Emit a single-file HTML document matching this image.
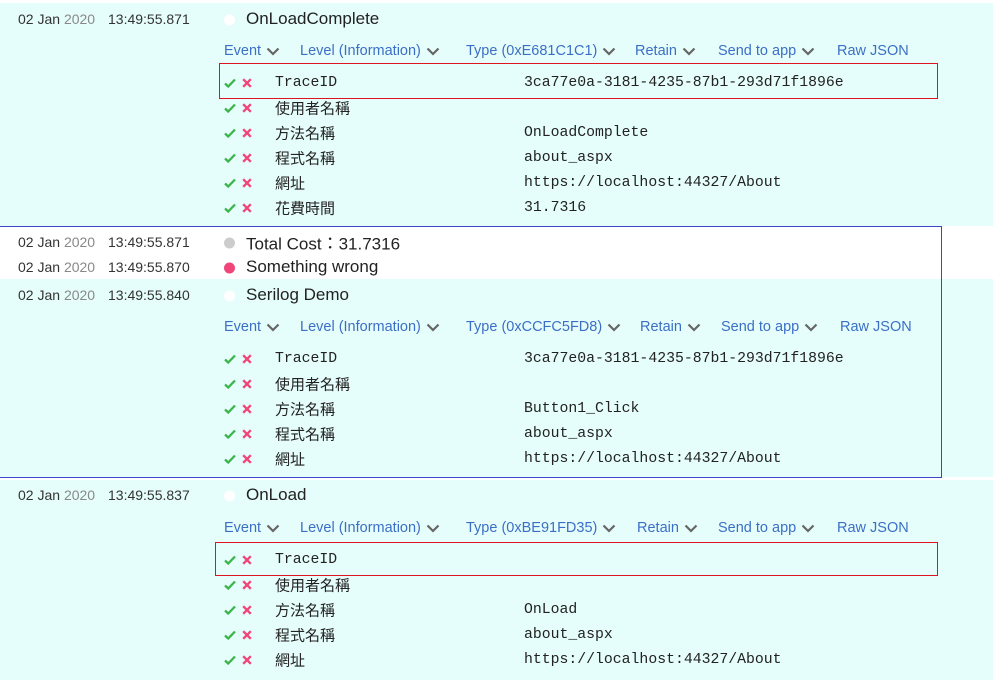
<!DOCTYPE html>
<html><head><meta charset="utf-8"><style>
*{margin:0;padding:0;box-sizing:border-box}
body{width:993px;height:680px;overflow:hidden;background:#fff;font-family:"Liberation Sans","Noto Sans CJK TC",sans-serif;position:relative}
.bg{position:absolute;left:0;width:993px;background:#e6fefb}
.a{position:absolute;white-space:nowrap}
.d{font-size:14px;color:#333;transform:translateY(-50%)}
.d i{font-style:normal;color:#888}
.t{font-size:17px;color:#222;transform:translateY(-50%)}
.dot{position:absolute;width:11px;height:11px;border-radius:50%;transform:translateY(-50%)}
.l{font-size:14.5px;color:#3b6fc6;transform:translateY(-50%)}
.l svg{vertical-align:middle;margin-left:5px}
.ic{position:absolute;transform:translateY(-50%)}
.k{font-size:15px;color:#222;transform:translateY(-50%)}
.m{font-family:"Liberation Mono",monospace;font-size:14.8px}
.v{font-family:"Liberation Mono",monospace;font-size:14.8px;color:#222;transform:translateY(-50%)}
.box{position:absolute;border:1px solid #e0141e}
</style></head><body>
<div class="bg" style="top:3px;height:223px"></div>
<div class="bg" style="top:279px;height:198px"></div>
<div class="bg" style="top:480px;height:200px"></div>
<div style="position:absolute;left:-1px;top:226px;width:943px;height:252px;border:1.5px solid #3a47c8"></div>
<div class="box" style="left:219px;top:63px;width:719px;height:36px"></div>
<div class="box" style="left:215px;top:542px;width:723px;height:34px"></div>
<div id="c"></div>
<script>
var h='';
function chev(){return '<svg width="14" height="9" viewBox="0 0 14 9"><path d="M1.5 1.5L7 7l5.5-5.5" fill="none" stroke="#666" stroke-width="2.2"/></svg>';}
function row(y,date,time,title,dotc){
h+='<div class="a d" style="left:18px;top:'+y+'px">02 Jan <i>2020</i></div>';
h+='<div class="a d" style="left:108px;top:'+y+'px">'+time+'</div>';
h+='<div class="dot" style="left:224px;top:'+(y+1)+'px;background:'+dotc+'"></div>';
h+='<div class="a t" style="left:246px;top:'+y+'px">'+title+'</div>';}
function links(y,type,xs){
var n=['Event','Level (Information)','Type ('+type+')','Retain','Send to app','Raw JSON'];
for(var i=0;i<6;i++)h+='<div class="a l" style="left:'+xs[i]+'px;top:'+y+'px">'+n[i]+(i<5?chev():'')+'</div>';}
function props(y,list){
for(var i=0;i<list.length;i++){var yy=y+i*25;
h+='<svg class="ic" style="left:224px;top:'+yy+'px" width="12" height="10" viewBox="0 0 12 10"><path d="M1 5.5l3.2 3L11 1.5" fill="none" stroke="#3bb54a" stroke-width="2.3"/></svg>';
h+='<svg class="ic" style="left:242px;top:'+yy+'px" width="10" height="10" viewBox="0 0 10 10"><path d="M1.2 1.2l7.6 7.6M8.8 1.2l-7.6 7.6" stroke="#f0457a" stroke-width="2.4"/></svg>';
var k=list[i][0];h+='<div class="a k'+(k=='TraceID'?' m':'')+'" style="left:275px;top:'+yy+'px">'+k+'</div>';
if(list[i][1])h+='<div class="a v" style="left:524px;top:'+yy+'px">'+list[i][1]+'</div>';}}
var tid='3ca77e0a-3181-4235-87b1-293d71f1896e',url='https://localhost:44327/About';
row(19,'','13:49:55.871','OnLoadComplete','#fff');
links(51,'0xE681C1C1',[224,300,466,635,718,837]);
props(83,[['TraceID',tid],['使用者名稱',''],['方法名稱','OnLoadComplete'],['程式名稱','about_aspx'],['網址',url],['花費時間','31.7316']]);
row(242,'','13:49:55.871','Total Cost：31.7316','#ccc');
row(267,'','13:49:55.870','Something wrong','#f0457a');
row(295,'','13:49:55.840','Serilog Demo','#fff');
links(327,'0xCCFC5FD8',[224,300,466,640,721,840]);
props(359,[['TraceID',tid],['使用者名稱',''],['方法名稱','Button1_Click'],['程式名稱','about_aspx'],['網址',url]]);
row(495,'','13:49:55.837','OnLoad','#fff');
links(528,'0xBE91FD35',[224,300,466,637,718,837]);
props(560,[['TraceID',''],['使用者名稱',''],['方法名稱','OnLoad'],['程式名稱','about_aspx'],['網址',url]]);
document.getElementById('c').innerHTML=h;
</script>
</body></html>
